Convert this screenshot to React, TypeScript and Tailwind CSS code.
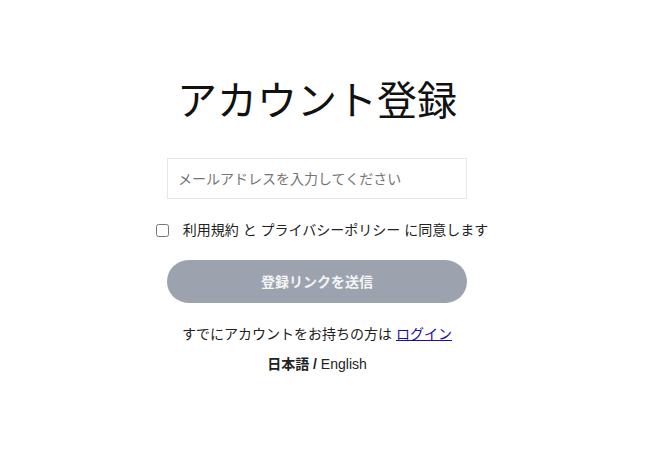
import React, { useState } from 'react';

export default function App() {
    const [agreed, setAgreed] = useState(false);
    const [email, setEmail] = useState('');

    return (
        <div
            className="min-h-screen bg-white text-[#1f2328] flex flex-col items-center pt-[77px] pr-[18px]"
            style={{ fontFamily: '"Liberation Sans", "Noto Sans CJK JP", sans-serif' }}
        >
            <h1 className="text-[40px] leading-[48px] font-normal text-[#111]">アカウント登録</h1>

            <input
                type="email"
                value={email}
                onChange={(e) => setEmail(e.target.value)}
                placeholder="メールアドレスを入力してください"
                className="mt-[33px] w-[300px] h-[41px] px-[10px] border border-[#e5e7eb] text-sm text-[#222] placeholder:text-[#757575] outline-none"
            />

            <label className="mt-[21px] flex items-center gap-[14px] text-sm leading-5 text-[#222] translate-x-[5px]">
                <input
                    type="checkbox"
                    checked={agreed}
                    onChange={(e) => setAgreed(e.target.checked)}
                    className="w-[13px] h-[13px] m-0"
                />
                <span>利用規約 と プライバシーポリシー に同意します</span>
            </label>

            <button
                disabled={!agreed}
                className="mt-[20px] w-[300px] h-[43px] rounded-full bg-[#9ca3af] text-[#f3f4f6] text-sm font-semibold"
            >
                登録リンクを送信
            </button>

            <p className="mt-[21px] text-sm leading-5 text-[#222]">
                すでにアカウントをお持ちの方は{' '}
                <a href="#" className="text-[#1a0dab] underline">ログイン</a>
            </p>

            <p className="mt-[10px] text-sm leading-5 text-[#222]">
                <span className="font-bold">日本語 /</span> English
            </p>
        </div>
    );
}
